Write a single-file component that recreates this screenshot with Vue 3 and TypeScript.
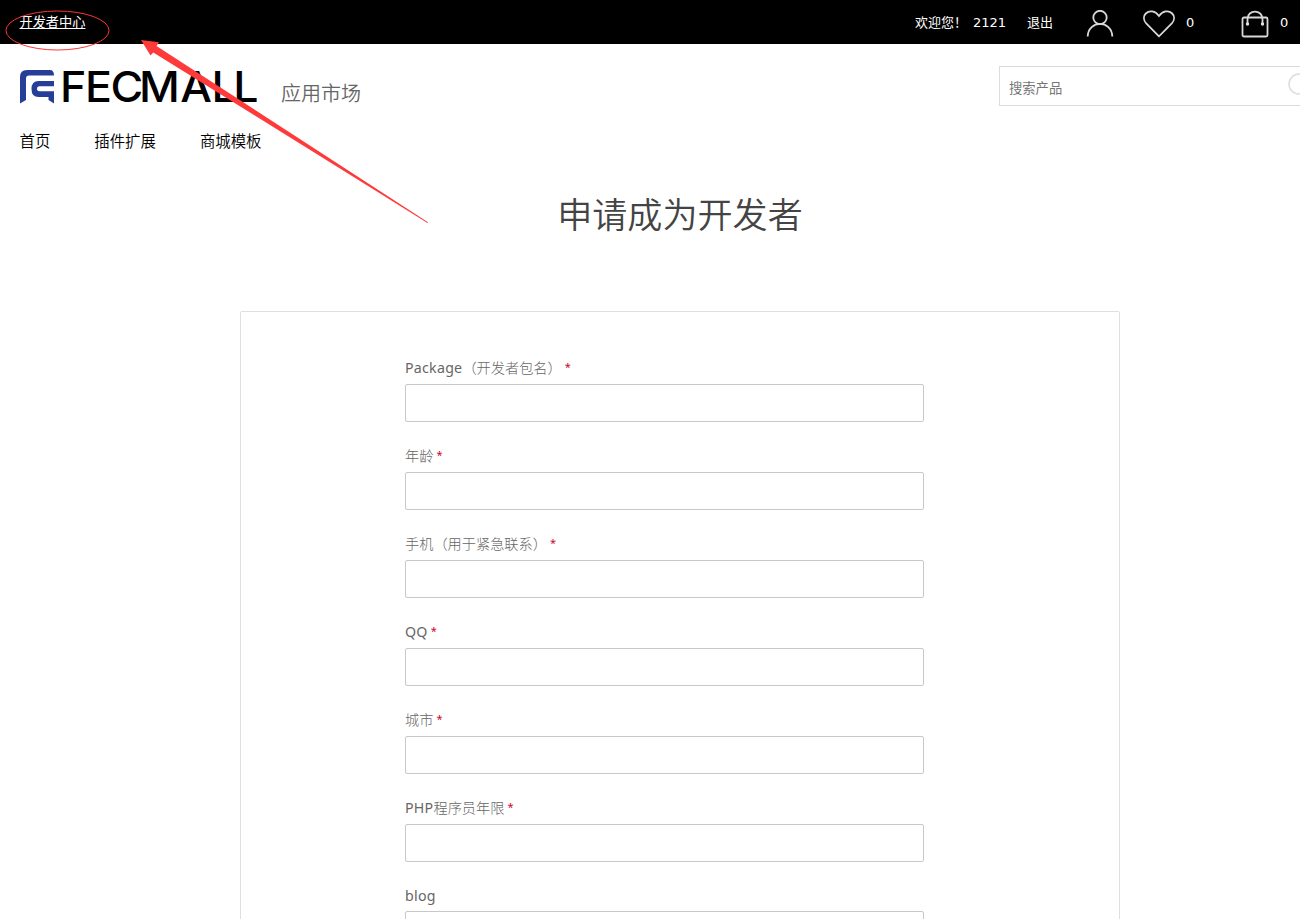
<script setup lang="ts">
interface LabelPart {
  text: string
  latin: boolean
}
interface Field {
  parts: LabelPart[]
  required: boolean
}

const navItems: string[] = ['首页', '插件扩展', '商城模板']

// Latin runs are set slightly heavier and wider than the Chinese ones.
function makeField(label: string, required = true): Field {
  const parts = (label.match(/[A-Za-z]+|[^A-Za-z]+/g) ?? []).map((text) => ({
    text,
    latin: /^[A-Za-z]/.test(text),
  }))
  return { parts, required }
}

const fields: Field[] = [
  makeField('Package（开发者包名）'),
  makeField('年龄'),
  makeField('手机（用于紧急联系）'),
  makeField('QQ'),
  makeField('城市'),
  makeField('PHP程序员年限'),
  makeField('blog', false),
]
</script>

<template>
  <div class="viewport">
    <div class="page">
      <header class="topbar">
        <a class="dev-link">开发者中心</a>
        <div class="account">
          <span class="welcome">欢迎您！</span>
          <span class="user">2121</span>
          <a class="logout">退出</a>
          <svg class="icon-user" width="28" height="28" viewBox="0 0 28 28">
            <circle cx="14" cy="7.500" r="6.700" />
            <path d="M1.700 26.500C2.200 9.700 25.800 9.700 26.300 26.500" />
          </svg>
          <svg class="icon-heart" width="34" height="30" viewBox="0 0 34 30">
            <path d="M17 27.300L4.200 14.300C1.200 11 1.300 7 3.800 4.500C7.500 1 13 1.700 17 7C21 1.700 26.500 1 30.200 4.500C32.700 7 32.800 11 29.800 14.300Z" />
          </svg>
          <span class="count wish-count">0</span>
          <svg class="icon-bag" width="28" height="28" viewBox="0 0 28 28">
            <rect x="1.500" y="7.500" width="25" height="19" rx="1.500" />
            <path d="M6.500 14V9C6.500-.8 21.500-.8 21.500 9V14" />
            <circle class="dot" cx="6.500" cy="14" r="1.700" />
            <circle class="dot" cx="21.500" cy="14" r="1.700" />
          </svg>
          <span class="count">0</span>
        </div>
      </header>

      <div class="brand-row">
        <svg class="logo" width="240" height="38" viewBox="0 0 240 38">
          <g class="mark">
            <path d="M0 35.500V9Q0 2 7 2H30Q34 2 34 7.500H9Q6 7.500 6 10.500V32Z" />
            <path d="M34 13V18.300H19.500Q17 18.300 17 20.800T19.500 23.300H34V35.500L28.500 32V29H18.500Q11.500 29 11.500 21T18.500 13Z" />
          </g>
          <text transform="scale(1.05 1)" x="38 62 86.200 113.400 152.600 182.400 203" y="34">FECMALL</text>
        </svg>
        <span class="market">应用市场</span>
        <div class="search">
          <input type="text" placeholder="搜索产品" />
          <svg width="32" height="32" viewBox="0 0 32 32">
            <circle cx="11" cy="11" r="10" />
            <path d="M18 18L28 28" />
          </svg>
        </div>
      </div>

      <nav class="nav">
        <a v-for="item in navItems" :key="item">{{ item }}</a>
      </nav>

      <h1>申请成为开发者</h1>

      <form class="panel">
        <div v-for="(field, i) in fields" :key="i" class="field">
          <label><span v-for="part in field.parts" :key="part.text" :class="{ latin: part.latin }">{{ part.text }}</span><em v-if="field.required">*</em></label>
          <input type="text" />
        </div>
      </form>
    </div>

    <svg class="annotation" width="440" height="230" viewBox="0 0 440 230">
      <ellipse cx="57.500" cy="30.500" rx="51.500" ry="19.500" />
      <path d="M141 40L159 42.300L156.500 46L428 222.300L427.500 223L153.300 52.500L150.500 55.500Z" />
    </svg>
  </div>
</template>

<style>
body {
  margin: 0;
  background: #fff;
}
</style>

<style scoped>
.viewport {
  position: relative;
  width: 1300px;
  height: 919px;
  overflow: hidden;
  background: #fff;
  font-family: "Noto Sans", "Noto Sans CJK SC", sans-serif;
}
.page {
  width: 1360px;
}
.topbar {
  display: flex;
  height: 44px;
  padding-left: 19.500px;
  background: #000;
  color: #fff;
  font: 13px/46px "DejaVu Sans", "Noto Sans CJK SC", sans-serif;
}
.dev-link {
  height: 44px;
  font-size: 13.200px;
  text-decoration: underline;
}
.account {
  display: flex;
  align-items: flex-start;
  width: 385px;
  margin-left: auto;
  margin-right: 60px;
}
.account svg {
  flex: none;
  fill: none;
  stroke: #d8d8d8;
  stroke-width: 1.800;
}
.account .dot {
  fill: #e2e2e2;
  stroke: none;
}
.welcome { width: 58px; }
.user { width: 54px; }
.logout { width: 59px; }
.icon-user { margin-top: 10px; margin-right: 28px; }
.icon-heart { margin-top: 9px; margin-right: 10px; }
.wish-count { width: 55px; }
.icon-bag { margin-top: 10px; margin-right: 11px; }
.brand-row {
  display: flex;
  height: 66px;
  padding-left: 20px;
}
.logo {
  margin-top: 24px;
  overflow: visible;
}
.mark { fill: #273e98; }
.logo text {
  font: 500 42.600px Inter, sans-serif;
  fill: #000;
}
.market {
  margin-left: 21px;
  padding-top: 35px;
  font-family: "Noto Sans CJK SC", sans-serif;
  font-size: 20px;
  line-height: 28px;
  font-weight: 350;
  color: #666;
}
.search {
  display: flex;
  align-items: flex-start;
  box-sizing: border-box;
  width: 340px;
  height: 40px;
  margin-top: 22px;
  margin-left: auto;
  margin-right: 21px;
  border: 1px solid #dcdcdc;
}
.search input {
  width: 288px;
  height: 40px;
  box-sizing: border-box;
  padding: 0 0 0 9px;
  border: 0;
  background: transparent;
  font: 13.300px "Noto Sans CJK SC", sans-serif;
}
.search input::placeholder { color: #757575; opacity: 1; }
.search svg {
  margin-top: 6px;
  fill: none;
  stroke: #dcdcdc;
  stroke-width: 1.500;
}
.nav {
  display: flex;
  gap: 44px;
  padding: 18px 0 0 19.500px;
  font: 15.400px/24px "Noto Sans CJK SC", sans-serif;
  font-weight: 350;
  color: #000;
}
h1 {
  margin: 36px 0 0;
  text-align: center;
  font-family: "Noto Sans CJK SC", sans-serif;
  font-size: 35.100px;
  line-height: 50px;
  font-weight: 350;
  color: #444;
}
.panel {
  box-sizing: border-box;
  width: 880px;
  height: 700px;
  margin: 73px auto 0;
  padding: 42px 164px 0;
  border: 1px solid #dfdfdf;
  border-radius: 2px;
}
.field {
  height: 88px;
}
.field label {
  display: block;
  height: 30px;
  font-family: "Noto Sans CJK SC", sans-serif;
  font-size: 14.200px;
  line-height: 26px;
  font-weight: 300;
  color: #666;
}
.field:last-child label {
  height: 29px;
}
.field .latin {
  font-family: "Noto Sans", sans-serif;
  font-weight: 400;
  letter-spacing: .25px;
}
.field em {
  margin-left: 3px;
  font: 400 11px/1 "Noto Sans", sans-serif;
  vertical-align: 2px;
  color: #d10029;
}
.field input {
  display: block;
  box-sizing: border-box;
  width: 519px;
  height: 38px;
  border: 1px solid #c8c8c8;
  border-radius: 2px;
  background: #fff;
}
.annotation {
  position: absolute;
  top: 0;
  left: 0;
  pointer-events: none;
}
.annotation ellipse {
  fill: none;
  stroke: #f33;
  stroke-width: 1;
}
.annotation path { fill: #ff3a3a; }
</style>
